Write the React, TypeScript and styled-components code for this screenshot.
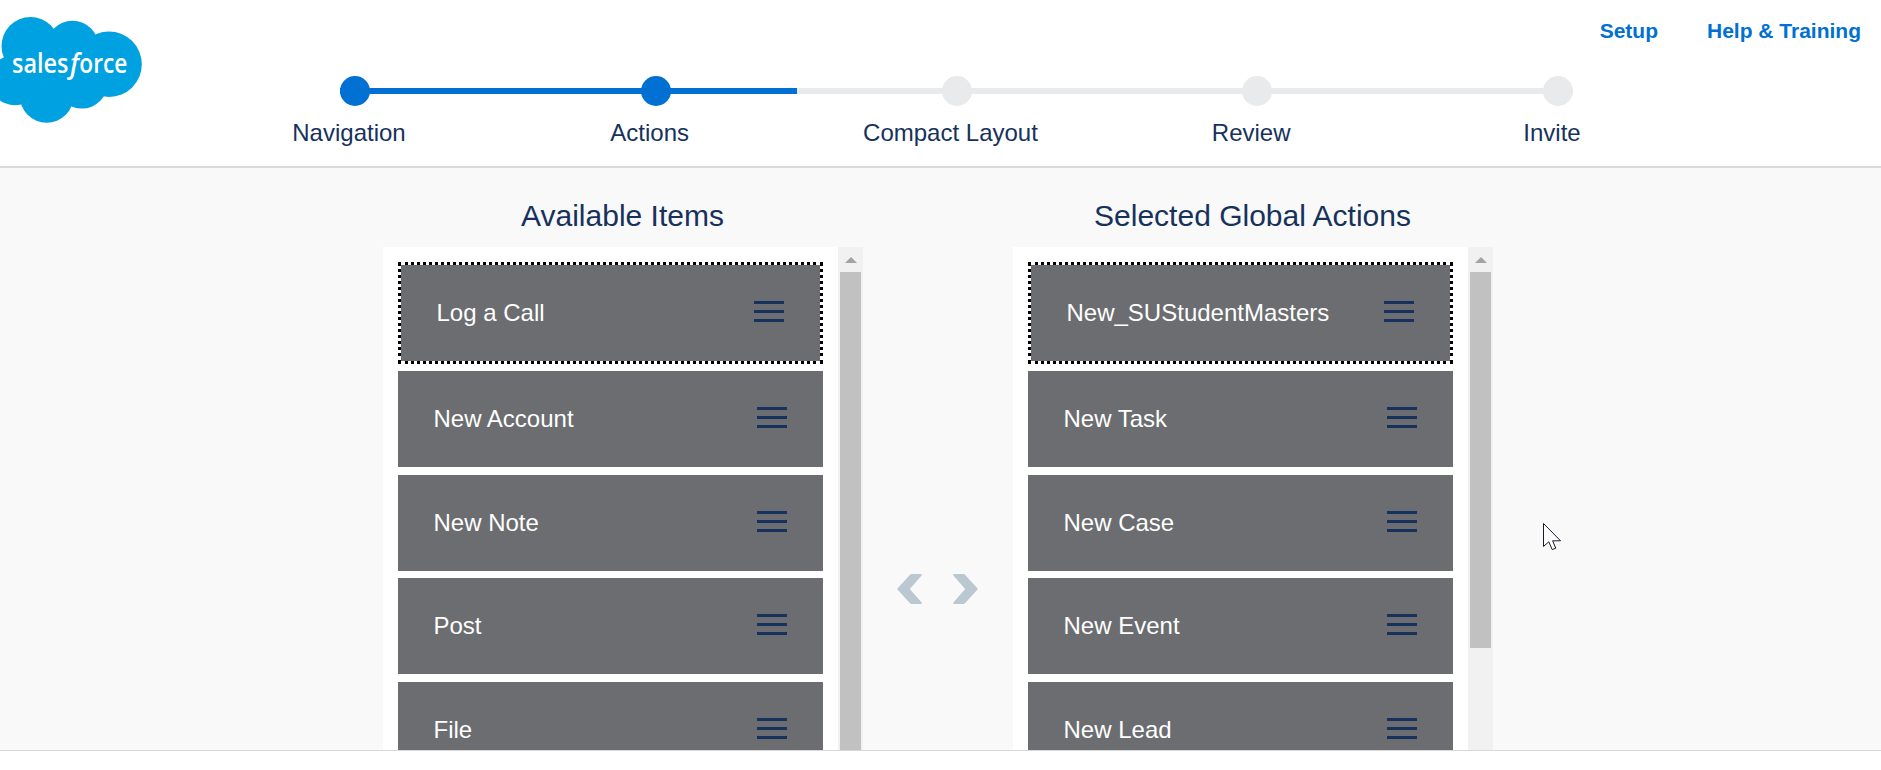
import React from "react";
import styled, { createGlobalStyle, css } from "styled-components";

const GlobalStyle = createGlobalStyle`
  * { box-sizing: border-box; }
  body {
    margin: 0;
    overflow: hidden;
    background: #fff;
    color: #16325c;
    font-family: "Liberation Sans", Arial, sans-serif;
  }
`;

const Page = styled.div`
  height: 770px;
  display: flex;
  flex-direction: column;
`;

const Header = styled.header`
  flex: none;
  height: 168px;
  display: grid;
  grid-template-columns: 142px 1fr;
  border-bottom: 2px solid #d9dadb;
`;

const Logo = styled.svg`
  display: block;
  width: 142px;
  height: 130px;
`;

const Wordmark = styled.text`
  fill: #fff;
  font-family: "Open Sans", sans-serif;
  font-size: 26.5px;
  font-weight: 600;
`;

const HeaderMain = styled.div`
  min-width: 0;
`;

const TopLinks = styled.nav`
  height: 76px;
  display: flex;
  justify-content: flex-end;
  gap: 49px;
  padding: 19px 20px 0 0;
`;

const TopLink = styled.a`
  font-size: 21px;
  line-height: 24px;
  font-weight: bold;
  color: #0070d2;
`;

const Track = styled.div`
  width: 1233px;
  height: 30px;
  margin-left: 198px;
  display: flex;
  justify-content: space-between;
  background: linear-gradient(to right, #0070d2 457px, #e8eaeb 457px) left 12px / 100% 6px no-repeat;
`;

const Dot = styled.span<{ $done: boolean }>`
  width: 30px;
  height: 30px;
  border-radius: 50%;
  background: ${(p) => (p.$done ? "#0070d2" : "#e8eaeb")};
`;

const Labels = styled.div`
  width: 1503.75px;
  margin: 13px 0 0 56.6px;
  display: flex;
`;

const Label = styled.span`
  flex: 1;
  text-align: center;
  font-size: 24px;
  line-height: 28px;
`;

const Content = styled.main`
  flex: none;
  height: 583px;
  display: flex;
  padding-left: 383px;
  overflow: hidden;
  background: #f9f9f9;
  border-bottom: 1px solid #d8d8d8;
`;

const Column = styled.section`
  width: 480px;
`;

const Title = styled.h2`
  height: 79px;
  margin: 0;
  padding: 30px 1px 0 0;
  font-size: 30px;
  line-height: 36px;
  font-weight: normal;
  text-align: center;
`;

const ListBox = styled.div`
  height: 503px;
  display: flex;
  overflow: hidden;
  background: #fff;
`;

const List = styled.ul`
  width: 455px;
  margin: 0;
  padding: 15px;
  display: flex;
  flex-direction: column;
  gap: 7.45px;
  list-style: none;
`;

const Item = styled.li<{ $focused: boolean }>`
  flex: none;
  height: 96px;
  display: flex;
  justify-content: space-between;
  align-items: flex-start;
  padding: 34px 36px 0 35.5px;
  background: #6b6d70;
  background-clip: padding-box;
  color: #fff;
  font-size: 24px;
  line-height: 28px;
  ${(p) =>
    p.$focused &&
    css`
      height: 102px;
      border: 3px dotted #000;
    `}
`;

const Handle = styled.span`
  width: 30px;
  height: 21px;
  margin-top: 2px;
  border: solid #16325c;
  border-width: 3px 0;
  background: linear-gradient(#16325c, #16325c) center / 100% 3px no-repeat;
`;

const ScrollTrack = styled.div`
  width: 25px;
  display: flex;
  flex-direction: column;
  align-items: center;
  background: #f1f1f1;
`;

const ScrollArrow = styled.span`
  margin: 10px 0 9px;
  border: 6px solid transparent;
  border-top: 0;
  border-bottom-color: #a3a3a3;
`;

const ScrollThumb = styled.div<{ $length: number }>`
  width: 21px;
  height: ${(p) => p.$length}px;
  background: #c1c1c1;
`;

const Movers = styled.div`
  width: 150px;
  display: flex;
  justify-content: center;
  gap: 31px;
  padding: 406px 1px 0 0;
`;

const Chevron = styled.svg<{ $flip?: boolean }>`
  width: 25px;
  height: 30px;
  fill: #b9c8d1;
  ${(p) => p.$flip && "transform: scaleX(-1);"}
`;

const Pointer = styled.svg`
  position: absolute;
  left: 1542px;
  top: 522px;
  width: 20px;
  height: 30px;
`;

const steps = ["Navigation", "Actions", "Compact Layout", "Review", "Invite"];
const available = ["Log a Call", "New Account", "New Note", "Post", "File"];
const selected = ["New_SUStudentMasters", "New Task", "New Case", "New Event", "New Lead"];

function ItemColumn({ title, items, thumb }: { title: string; items: string[]; thumb: number }) {
  return (
    <Column>
      <Title>{title}</Title>
      <ListBox>
        <List>
          {items.map((name, i) => (
            <Item key={name} $focused={i === 0}>
              {name}
              <Handle />
            </Item>
          ))}
        </List>
        <ScrollTrack>
          <ScrollArrow />
          <ScrollThumb $length={thumb} />
        </ScrollTrack>
      </ListBox>
    </Column>
  );
}

function MoveIcon({ flip }: { flip?: boolean }) {
  return (
    <Chevron $flip={flip} viewBox="0 0 25 30">
      <path d="M0 15 13 .7Q13.7 0 14.6 0H24Q25.3.3 24.6 1.4L12.8 15 24.6 28.6Q25.3 29.7 24 30H14.6Q13.7 30 13 29.3Z" />
    </Chevron>
  );
}

export default function App() {
  return (
    <Page>
      <GlobalStyle />
      <Header>
        <Logo viewBox="0 0 142 130">
          <g fill="#00a1e0">
            <circle cx="30.5" cy="46" r="29" />
            <circle cx="72.5" cy="47" r="26.3" />
            <circle cx="109" cy="64.2" r="32.8" />
            <circle cx="82" cy="83" r="25.6" />
            <circle cx="46.7" cy="95.7" r="27" />
            <circle cx="15" cy="80" r="25.3" />
            <path d="M20 40H100V85H20Z" />
          </g>
          <Wordmark x="12" y="73.3" textLength="56.5" lengthAdjust="spacingAndGlyphs">
            sales
          </Wordmark>
          <Wordmark x="70" y="73.3" fontStyle="italic" textLength="9" lengthAdjust="spacingAndGlyphs">
            f
          </Wordmark>
          <Wordmark x="79.3" y="73.3" textLength="48" lengthAdjust="spacingAndGlyphs">
            orce
          </Wordmark>
        </Logo>
        <HeaderMain>
          <TopLinks>
            <TopLink>Setup</TopLink>
            <TopLink>Help &amp; Training</TopLink>
          </TopLinks>
          <Track>
            {steps.map((s, i) => (
              <Dot key={s} $done={i < 2} />
            ))}
          </Track>
          <Labels>
            {steps.map((s) => (
              <Label key={s}>{s}</Label>
            ))}
          </Labels>
        </HeaderMain>
      </Header>
      <Content>
        <ItemColumn title="Available Items" items={available} thumb={478} />
        <Movers>
          <MoveIcon />
          <MoveIcon flip />
        </Movers>
        <ItemColumn title="Selected Global Actions" items={selected} thumb={376} />
      </Content>
      <Pointer viewBox="0 0 20 30">
        <path
          d="M1.5 1.5V24.5L6.8 19.8 10.2 27.6 13.8 26.2 10.6 18.8H18.5Z"
          fill="#fff"
          stroke="#1a1a28"
          strokeWidth="1"
        />
      </Pointer>
    </Page>
  );
}
